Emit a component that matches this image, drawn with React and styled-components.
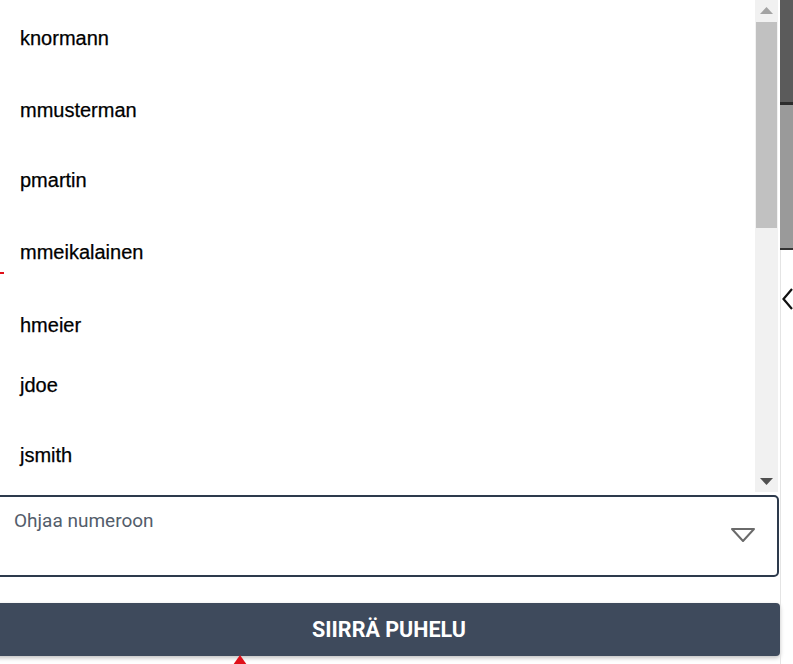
import React from 'react';
import styled, { createGlobalStyle } from 'styled-components';

const GlobalStyle = createGlobalStyle`
  html, body {
    margin: 0;
    padding: 0;
    background: #fff;
    overflow: hidden;
  }
  * { box-sizing: border-box; }
`;

// Layout
const Page = styled.div`
  position: relative;
  width: 793px;
  height: 664px;
  display: flex;
  overflow: hidden;
`;

const Main = styled.div`
  width: 786px;
  margin-left: -6px;
  display: flex;
  flex-direction: column;
`;

const SideStrip = styled.div`
  width: 13px;
  display: flex;
  flex-direction: column;
`;

const DarkBlock = styled.div`
  height: 105px;
  background: #5b5b5b;
  border-bottom: 3px solid #2b2b2b;
`;

const GreyBlock = styled.div`
  height: 145px;
  background: #9a9a9a;
  border-bottom: 2px solid #333;
`;

const StripRest = styled.div`
  flex: 1;
  border-left: 1px solid #e4e4e4;
  padding-top: 38px;
  padding-left: 1px;
`;

// User list
const ListPanel = styled.div`
  height: 492px;
  display: flex;
  background: #fff;
`;

const ListItems = styled.div`
  flex: 1;
  overflow: hidden;
  padding-top: 2px;
`;

const ListRow = styled.div`
  height: ${(p) => p.$h}px;
  display: flex;
  align-items: center;
  padding-left: 26px;
  font-family: "Liberation Sans", Arial, sans-serif;
  font-size: 20px;
  color: #000;
  -webkit-text-stroke: 0.25px #000;
`;

const Scrollbar = styled.div`
  width: 23px;
  margin-right: 2px;
  background: #f1f1f1;
  display: flex;
  flex-direction: column;
  align-items: center;
`;

const ScrollArrow = styled.div`
  height: 21px;
  width: 100%;
  display: flex;
  align-items: center;
  justify-content: center;
`;

const ScrollThumb = styled.div`
  width: 21px;
  height: 206px;
  margin-top: 1px;
  background: #c1c1c1;
`;

const ScrollSpacer = styled.div`
  flex: 1;
`;

// Select
const SelectBox = styled.div`
  margin-top: 3px;
  height: 82px;
  width: 785px;
  border: 2px solid #2d3a4c;
  border-radius: 5px;
  display: flex;
  justify-content: space-between;
  padding: 11px 22px 0 18px;
  background: #fff;
`;

const SelectLabel = styled.span`
  font-family: Roboto, "Noto Sans", sans-serif;
  font-size: 19px;
  color: #535d6b;
  line-height: 26px;
`;

const SelectChevron = styled.div`
  padding-top: 20px;
`;

// Button
const TransferButton = styled.button`
  margin-top: 26px;
  height: 53px;
  width: 786px;
  border: none;
  border-radius: 4px;
  background: #3e4a5c;
  color: #fff;
  font-family: Roboto, "Noto Sans", sans-serif;
  font-weight: 700;
  font-size: 21.5px;
  padding-left: 10px;
  box-shadow: 0 2px 4px rgba(0, 0, 0, 0.25);
  cursor: pointer;
`;

// Overlay marks
const RedTick = styled.div`
  position: absolute;
  left: 0;
  top: 272px;
  width: 4px;
  height: 2px;
  background: #e0101a;
`;

const RedPointer = styled.div`
  position: absolute;
  left: 233px;
  top: 655px;
  width: 0;
  height: 0;
  border-left: 7px solid transparent;
  border-right: 7px solid transparent;
  border-bottom: 10px solid #e0101a;
`;

const users = [
  { name: 'knormann', h: 73 },
  { name: 'mmusterman', h: 71 },
  { name: 'pmartin', h: 69 },
  { name: 'mmeikalainen', h: 75 },
  { name: 'hmeier', h: 71 },
  { name: 'jdoe', h: 49 },
  { name: 'jsmith', h: 91 },
];

export default function App() {
  return (
    <>
      <GlobalStyle />
      <Page>
        <Main>
          <ListPanel>
            <ListItems>
              {users.map((u) => (
                <ListRow key={u.name} $h={u.h}>{u.name}</ListRow>
              ))}
            </ListItems>
            <Scrollbar>
              <ScrollArrow>
                <svg width="13" height="7" viewBox="0 0 13 7">
                  <path d="M0 7 L6.5 0 L13 7 Z" fill="#a3a3a3" />
                </svg>
              </ScrollArrow>
              <ScrollThumb />
              <ScrollSpacer />
              <ScrollArrow>
                <svg width="13" height="7" viewBox="0 0 13 7">
                  <path d="M0 0 L13 0 L6.5 7 Z" fill="#505050" />
                </svg>
              </ScrollArrow>
            </Scrollbar>
          </ListPanel>

          <SelectBox>
            <SelectLabel>Ohjaa numeroon</SelectLabel>
            <SelectChevron>
              <svg width="24" height="14" viewBox="0 0 24 14">
                <path d="M1 1 L23 1 L12 13 Z" fill="none" stroke="#6a6a6a" strokeWidth="2" strokeLinejoin="round" />
              </svg>
            </SelectChevron>
          </SelectBox>

          <TransferButton>SIIRRÄ PUHELU</TransferButton>
        </Main>

        <SideStrip>
          <DarkBlock />
          <GreyBlock />
          <StripRest>
            <svg width="11" height="22" viewBox="0 0 11 22">
              <path d="M10 1 L1.5 11 L10 21" fill="none" stroke="#111" strokeWidth="2.2" />
            </svg>
          </StripRest>
        </SideStrip>

        <RedTick />
        <RedPointer />
      </Page>
    </>
  );
}
